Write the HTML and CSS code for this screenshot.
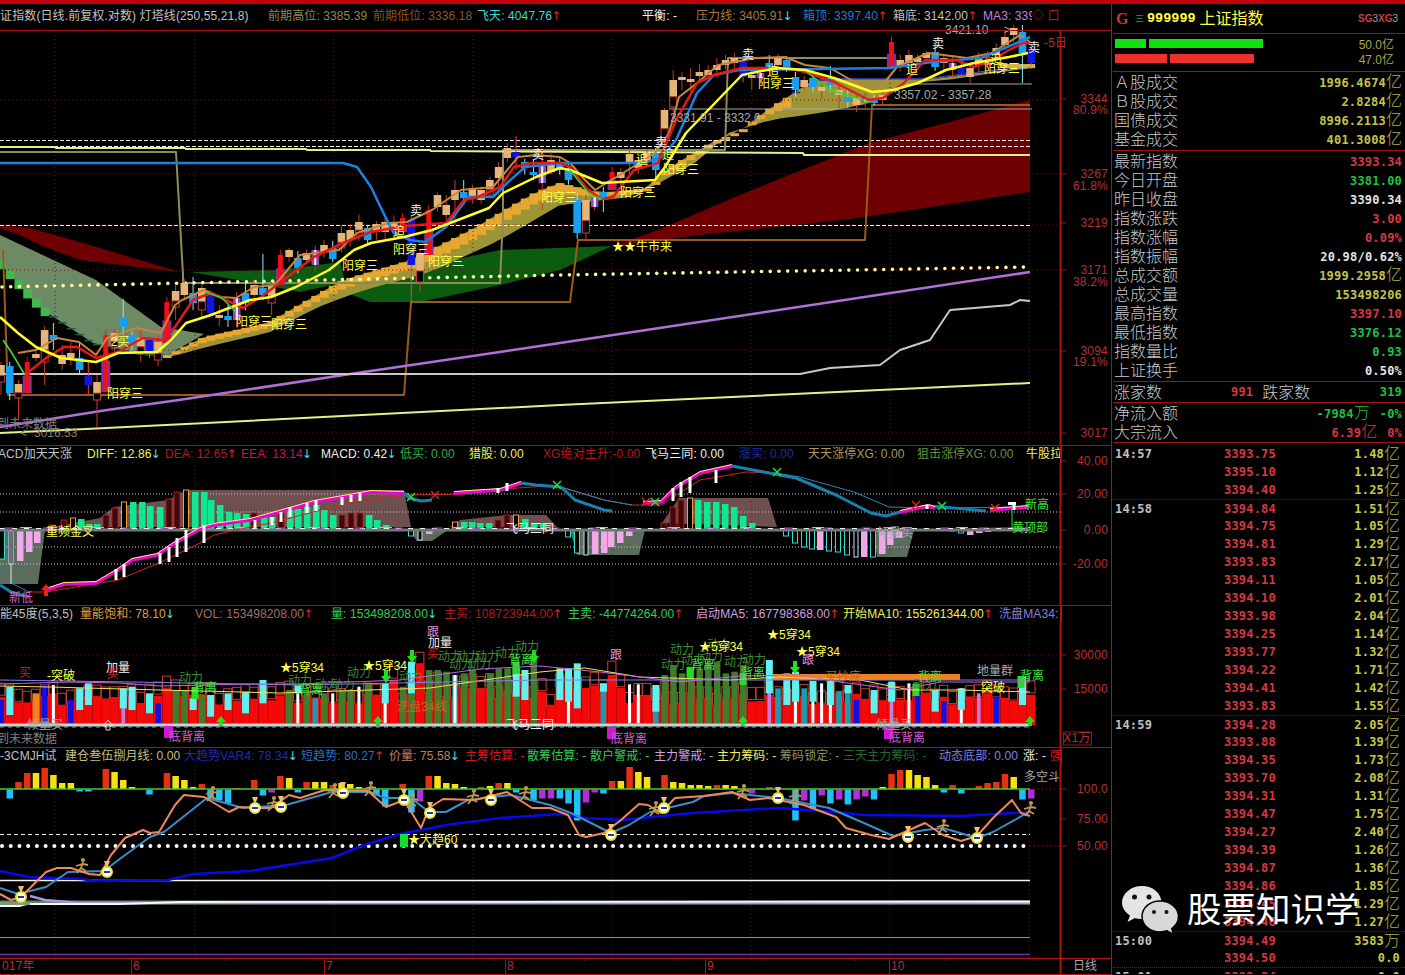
FILE: index.html
```html
<!DOCTYPE html>
<html lang="zh">
<head>
<meta charset="utf-8">
<title>上证指数</title>
<link rel="stylesheet" href="styles.css">
</head>
<body>
<div class="topbar"></div>
<div class="app">
  <main class="charts">
    <section class="pane">
      <div class="legend legend-main" id="lg0"></div>
      <svg class="plot plot-main" id="p0" viewBox="0 31 1111 414"></svg>
    </section>
    <section class="pane">
      <div class="legend" id="lg1"></div>
      <svg class="plot plot-macd" id="p1" viewBox="0 463 1111 142"></svg>
    </section>
    <section class="pane">
      <div class="legend" id="lg2"></div>
      <svg class="plot plot-vol" id="p2" viewBox="0 623 1111 124"></svg>
    </section>
    <section class="pane">
      <div class="legend" id="lg3"></div>
      <svg class="plot plot-kd" id="p3" viewBox="0 765 1111 210"></svg>
    </section>
  </main>
  <aside class="side">
    <div class="sec head">
      <span class="g">G</span><span class="sanb">三</span><b class="code">999999</b><span class="iname">上证指数</span>
      <span class="sgxg"><b>SG</b>3<b>XG</b>3</span>
    </div>
    <div class="sec bars">
      <div class="barrow"><i class="bar gr b31"></i><i class="bar gr b114"></i><span class="barv">50.0亿</span></div>
      <div class="barrow"><i class="bar rd b52"></i><i class="bar rd b84"></i><span class="barv">47.0亿</span></div>
    </div>
    <div class="sec s4">
      <div class="row"><span>Ａ股成交</span><em class="ol">1996.4674<u>亿</u></em></div>
      <div class="row"><span>Ｂ股成交</span><em class="ol">2.8284<u>亿</u></em></div>
      <div class="row"><span>国债成交</span><em class="ol">8996.2113<u>亿</u></em></div>
      <div class="row"><span>基金成交</span><em class="ol">401.3008<u>亿</u></em></div>
    </div>
    <div class="sec s12">
      <div class="row"><span>最新指数</span><em class="re">3393.34</em></div>
      <div class="row"><span>今日开盘</span><em class="gn">3381.00</em></div>
      <div class="row"><span>昨日收盘</span><em class="wh">3390.34</em></div>
      <div class="row"><span>指数涨跌</span><em class="re">3.00</em></div>
      <div class="row"><span>指数涨幅</span><em class="re">0.09%</em></div>
      <div class="row"><span>指数振幅</span><em class="wh">20.98/0.62%</em></div>
      <div class="row"><span>总成交额</span><em class="ol">1999.2958<u>亿</u></em></div>
      <div class="row"><span>总成交量</span><em class="ol">153498206</em></div>
      <div class="row"><span>最高指数</span><em class="re">3397.10</em></div>
      <div class="row"><span>最低指数</span><em class="gn">3376.12</em></div>
      <div class="row"><span>指数量比</span><em class="gn">0.93</em></div>
      <div class="row"><span>上证换手</span><em class="wh">0.50%</em></div>
    </div>
    <div class="sec updown">
      <span>涨家数</span><em class="re n1">991</em><span class="lb2">跌家数</span><em class="gn n2">319</em>
    </div>
    <div class="sec s2">
      <div class="row"><span>净流入额</span><em class="gn">-7984<u>万</u><b class="pc">-0%</b></em></div>
      <div class="row"><span>大宗流入</span><em class="re">6.39<u>亿</u><b class="pc">0%</b></em></div>
    </div>
    <div class="ticks">
      <div class="tk"><span>14:57</span><em>3393.75</em><strong>1.48<u>亿</u></strong></div>
      <div class="tk"><span></span><em>3395.10</em><strong>1.12<u>亿</u></strong></div>
      <div class="tk"><span></span><em>3394.40</em><strong>1.25<u>亿</u></strong></div>
      <div class="tk sep"><span>14:58</span><em>3394.84</em><strong>1.51<u>亿</u></strong></div>
      <div class="tk"><span></span><em>3394.75</em><strong>1.05<u>亿</u></strong></div>
      <div class="tk"><span></span><em>3394.81</em><strong>1.29<u>亿</u></strong></div>
      <div class="tk"><span></span><em>3393.83</em><strong>2.17<u>亿</u></strong></div>
      <div class="tk"><span></span><em>3394.11</em><strong>1.05<u>亿</u></strong></div>
      <div class="tk"><span></span><em>3394.10</em><strong>2.01<u>亿</u></strong></div>
      <div class="tk"><span></span><em>3393.98</em><strong>2.04<u>亿</u></strong></div>
      <div class="tk"><span></span><em>3394.25</em><strong>1.14<u>亿</u></strong></div>
      <div class="tk"><span></span><em>3393.77</em><strong>1.32<u>亿</u></strong></div>
      <div class="tk"><span></span><em>3394.22</em><strong>1.71<u>亿</u></strong></div>
      <div class="tk"><span></span><em>3394.41</em><strong>1.42<u>亿</u></strong></div>
      <div class="tk"><span></span><em>3393.83</em><strong>1.55<u>亿</u></strong></div>
      <div class="tk sep"><span>14:59</span><em>3394.28</em><strong>2.05<u>亿</u></strong></div>
      <div class="tk"><span></span><em>3393.88</em><strong>1.39<u>亿</u></strong></div>
      <div class="tk"><span></span><em>3394.35</em><strong>1.73<u>亿</u></strong></div>
      <div class="tk"><span></span><em>3393.70</em><strong>2.08<u>亿</u></strong></div>
      <div class="tk"><span></span><em>3394.31</em><strong>1.31<u>亿</u></strong></div>
      <div class="tk"><span></span><em>3394.47</em><strong>1.75<u>亿</u></strong></div>
      <div class="tk"><span></span><em>3394.27</em><strong>2.40<u>亿</u></strong></div>
      <div class="tk"><span></span><em>3394.39</em><strong>1.26<u>亿</u></strong></div>
      <div class="tk"><span></span><em>3394.87</em><strong>1.36<u>亿</u></strong></div>
      <div class="tk"><span></span><em>3394.86</em><strong>1.85<u>亿</u></strong></div>
      <div class="tk"><span></span><em>3394.45</em><strong>1.29<u>亿</u></strong></div>
      <div class="tk"><span></span><em>3394.46</em><strong>1.27<u>亿</u></strong></div>
      <div class="tk sep"><span>15:00</span><em>3394.49</em><strong>3583<u>万</u></strong></div>
      <div class="tk"><span></span><em>3394.50</em><strong>0.0</strong></div>
      <div class="tk sep"><span>15:01</span><em>3393.34</em><strong>0.0</strong></div>
    </div>
  </aside>
</div>
<div class="watermark">
  <svg class="wx" viewBox="0 0 58 50" width="58" height="50">
    <path class="wxb" d="M20 1C9 1 0 8.500 0 17.500C0 23 3.500 27.500 8 30.500L5.500 37L13 33C15 33.600 17.500 34 20 34C31 34 39.500 26.500 39.500 17.500C39.500 8.500 31 1 20 1Z"/>
    <circle class="wxk" cx="12.500" cy="12" r="2.500"/><circle class="wxk" cx="27" cy="12" r="2.500"/>
    <path class="wxe" d="M38 16C27.500 16 20 23.200 20 31.500C20 39.800 27.500 47 38 47C40.500 47 43 46.500 45 45.800L51.500 49.500L49.800 43.500C54 40.500 56.500 36.300 56.500 31.500C56.500 23.200 48.500 16 38 16Z"/>
    <circle class="wxk" cx="32" cy="27" r="2"/><circle class="wxk" cx="44.500" cy="27" r="2"/>
  </svg>
  <span>股票知识学</span>
</div>
<script src="chart.js"></script>
</body>
</html>
```
FILE: styles.css
```css
* { box-sizing: border-box; }
html, body { margin: 0; height: 975px; width: 1405px; background: #000; overflow: hidden; }
body { font-family: "Liberation Sans", "Noto Sans CJK SC", sans-serif; color: #c0c0c0; position: relative; }
.topbar { height: 4px; background: #c40008; }
.app { display: flex; height: 971px; }
.charts { width: 1111px; flex: none; display: flex; flex-direction: column; }
.pane { display: flex; flex-direction: column; border-top: 1px solid #a81018; }
.pane:first-child { border-top: 0; }
.legend { display: flex; width: 1062px; height: 17px; line-height: 16px; font-size: 12px; white-space: nowrap; overflow: hidden; border-right: 2px solid #b01018; letter-spacing: .1px; }
.legend-main { height: 27px; line-height: 24px; border-bottom: 1px solid #a81018; width: 1111px; border-right: 0; position: relative; }
.lgi { flex: none; overflow: hidden; }
.lgi i { font: 12px "DejaVu Sans", sans-serif; color: #40e0f0; margin-left: -1px; }
.lgi i.up { color: #f02020; }
.plot { display: block; width: 1111px; overflow: visible; }
.plot-main { height: 414px; }
.plot-macd { height: 142px; }
.plot-vol { height: 124px; }
.plot-kd { height: 210px; }
svg text { font-family: "Liberation Sans", "Noto Sans CJK SC", sans-serif; font-size: 12px; dominant-baseline: central; }
.ax { fill: #b83030; font-size: 12px; letter-spacing: .2px; }
.yl { fill: #ffff50; }
.wt { fill: #f0f0f0; }
.gy { fill: #a8a8a8; }
.dm { fill: #808080; }
.dg { fill: #3c8c34; }
.bg { fill: #40e040; }
.pk { fill: #d060d0; }
.lp { fill: #e090d0; }
.rd { fill: #d02020; }
.og { fill: #c06820; }

/* legend colours */
.c-gy { color: #c0c0c0; } .c-ol { color: #8c8c50; } .c-br { color: #8a5620; } .c-cy { color: #40d8d8; }
.c-wh { color: #f0f0f0; } .c-ta { color: #b07840; } .c-bl { color: #2878d0; } .c-pu { color: #c080e0; }
.c-ye { color: #f0f060; } .c-re { color: #b81818; } .c-ma { color: #c81060; } .c-gn { color: #30b040; }
.c-db { color: #1c2cb8; } .c-kh { color: #a89860; } .c-ok { color: #68903c; } .c-og { color: #e0a040; }
.c-rb { color: #a07060; } .c-lg { color: #30d050; } .c-pk { color: #d0a0e0; } .c-vi { color: #8080e0; }
.c-kk { color: #c0c080; } .c-sb { color: #3070c0; } .c-sa { color: #c08060; } .c-dk { color: #206830; }
.c-om { color: #909060; } .c-rr { color: #d81818; }

.side { width: 294px; flex: none; border-left: 1px solid #b01018; padding-left: 1px; font-size: 16px; }
.sec { border-bottom: 1px solid #a01018; }
.head { height: 30px; display: flex; align-items: center; padding-left: 3px; position: relative; }
.g { color: #c83838; font: bold 16px "Liberation Serif", serif; width: 19px; }
.sanb { color: #20a050; font-size: 9px; width: 12px; }
.code { font: bold 13.500px "Liberation Mono", monospace; color: #ffff40; margin-right: 4px; }
.iname { color: #ffff40; font-size: 16px; margin-bottom: 3px; }
.sgxg { margin-left: auto; margin-right: 7px; font: 10px "Liberation Sans", sans-serif; color: #a0a0a0; }
.sgxg b { color: #c84048; }
.bars { height: 38px; padding: 5px 0 0 2px; display: flex; flex-direction: column; gap: 6px; }
.barrow { display: flex; gap: 3px; height: 9px; align-items: center; position: relative; }
.bar { display: block; height: 9px; }
.gr { background: #10e010; } .rd { background: #f03030; }
.b31 { width: 31px; } .b114 { width: 114px; } .b52 { width: 52px; } .b84 { width: 84px; }
.barv { position: absolute; right: 11px; font-size: 12px; color: #a8a848; }
.row { height: 19px; line-height: 19px; display: flex; justify-content: space-between; align-items: center; padding: 0 3px 0 1px; font-weight: 300; color: #c8c8c8; }
.row em, .n1, .n2, .tk em, .tk strong { font: bold 12px "DejaVu Sans Mono", monospace; letter-spacing: .2px; }
.row em, .tk strong { display: flex; align-items: center; justify-content: flex-end; height: 18px; font-style: normal; }
.row em u, .tk strong u { text-decoration: none; font: 300 16px/18px "Noto Sans CJK SC", sans-serif; color: #b0b048; letter-spacing: 0; margin-bottom: 5px; }
.row .pc { font: bold 12px "DejaVu Sans Mono", monospace; margin-left: 10px; }
.ol { color: #c4c44c; } .re { color: #d83840; } .gn { color: #20c040; } .wh { color: #e4e4e4; }
.s4 { height: 79px; padding-top: 1px; }
.s12 { height: 231px; padding-top: 1px; }
.updown { height: 21px; line-height: 21px; display: flex; align-items: center; padding-left: 1px; font-weight: 300; color: #c8c8c8; }
.updown em { font-style: normal; }
.n1 { margin-left: 69px; }
.lb2 { margin-left: 9px; }
.n2 { margin-left: auto; margin-right: 3px; }
.s2 { height: 40px; padding-top: 1px; }
.s2 .row em u { color: inherit; }
.ticks { padding-top: 2px; height: 531px; overflow: hidden; }
.tk { display: grid; grid-template-columns: 109px 60px 1fr; height: 18px; padding: 0 5px 0 2px; align-items: center; }
.tk span { font: bold 12px "DejaVu Sans Mono", monospace; letter-spacing: .2px; color: #c0c0c0; }
.tk em { color: #d83840; font-style: normal; }
.tk strong { color: #c8c84c; }
.sep { border-top: 1px dotted #701820; }
.watermark { position: absolute; left: 1122px; top: 885px; display: flex; align-items: center; gap: 7px; color: #fff; font-size: 34.500px; line-height: 50px; }
.wx { display: block; }
.wxb { fill: #e4e4e4; } .wxe { fill: #d8d8d8; stroke: #000; stroke-width: 1.500; } .wxk { fill: #111; }
```
FILE: chart.js
```js
const X = i => 1 + 8.73 * i;
const r = i => { const s = Math.sin(i * 12.9898 + 4.1) * 43758.5453; return s - Math.floor(s); };
const pts = a => a.map(p => p[0] + ',' + p[1]).join(' ');
const L = (a, c, w, extra) => `<polyline points="${pts(a)}" fill="none" stroke="${c}" stroke-width="${w || 1}" stroke-linejoin="round" ${extra || ''}/>`;
const H = (x1, x2, y, c, w, extra) => `<line x1="${x1}" x2="${x2}" y1="${y}" y2="${y}" stroke="${c}" stroke-width="${w || 1}" ${extra || ''}/>`;
const V = (x, y1, y2, c, w, extra) => `<line x1="${x}" x2="${x}" y1="${y1}" y2="${y2}" stroke="${c}" stroke-width="${w || 1}" ${extra || ''}/>`;
const R = (x, y, w, h, f, s) => `<rect x="${x}" y="${y}" width="${w}" height="${h}" fill="${f}" ${s ? `stroke="${s}"` : ''}/>`;
const PG = (a, f) => `<polygon points="${pts(a)}" fill="${f}"/>`;
const T = (x, y, s, c, anchor) => `<text x="${x}" y="${y}" class="${c}" text-anchor="${anchor || 'middle'}">${s}</text>`;
const interp = (a, x) => {
  if (x <= a[0][0]) return a[0][1];
  for (let k = 1; k < a.length; k++) if (x <= a[k][0]) {
    const t = (x - a[k - 1][0]) / (a[k][0] - a[k - 1][0]);
    return a[k - 1][1] + t * (a[k][1] - a[k - 1][1]);
  }
  return a[a.length - 1][1];
};
const GRID = [55, 195, 334, 473, 612, 751, 890, 1029];
const vgrid = (y1, y2) => GRID.map(x => V(x, y1, y2, '#6a1418', 1, 'stroke-dasharray="1 3"')).join('');
const axisLine = (y1, y2) => V(1060.5, y1, y2, '#b01018', 2);
const tick = (y, len) => H(1060, 1060 + (len || 6), y, '#a01018', 1);

/* legends: [text, value, arrow, colour, start-x] */
const legends = [
  [['上证指数(日线.前复权.对数) 灯塔线(250,55,21,8)', '', '', 'gy', -12], ['前期高位: 3385.39', '', '', 'ol', 268], ['前期低位: 3336.18', '', '', 'br', 373], ['飞天: 4047.76', '', 'u', 'cy', 477], ['平衡: -', '', '', 'wh', 642], ['压力线: 3405.91', '', 'd', 'ta', 696], ['箱顶: 3397.40', '', 'u', 'bl', 803], ['箱底: 3142.00', '', 'u', 'gy', 893], ['MA3: 339', '', '', 'pu', 983], ['◇ 口', '', '', 're', 1032]],
  [['ACD加天天涨', '', '', 'gy', -2], ['DIFF: 12.86', '', 'd', 'ye', 87], ['DEA: 12.65', '', 'u', 're', 165], ['EEA: 13.14', '', 'd', 'ma', 241], ['MACD: 0.42', '', 'd', 'wh', 321], ['低买: 0.00', '', '', 'gn', 400], ['猎股: 0.00', '', '', 'ye', 469], ['XG绝对主升:-0.00', '', '', 're', 543], ['飞马三同: 0.00', '', '', 'wh', 645], ['涨买: 0.00', '', '', 'db', 739], ['天天涨停XG: 0.00', '', '', 'kh', 808], ['狙击涨停XG: 0.00', '', '', 'ok', 917], ['牛股拉', '', '', 'ye', 1026]],
  [['能45度(5,3,5)', '', '', 'gy', 0], ['量能饱和: 78.10', '', 'd', 'og', 80], ['VOL: 153498208.00', '', 'u', 'rb', 195], ['量: 153498208.00', '', 'd', 'lg', 331], ['主买: 108723944.00', '', 'u', 're', 444], ['主卖: -44774264.00', '', 'u', 'lg', 568], ['启动MA5: 167798368.00', '', 'u', 'pk', 696], ['开始MA10: 155261344.00', '', 'u', 'ye', 843], ['洗盘MA34:', '', '', 'vi', 999]],
  [['-3CMJH试', '', '', 'gy', 0], ['建仓叁伍捌月线: 0.00', '', '', 'kk', 65], ['大趋势VAR4: 78.34', '', 'd', 'db', 184], ['短趋势: 80.27', '', 'u', 'sb', 301], ['价量: 75.58', '', 'd', 'sa', 389], ['主筹估算: -', '', '', 'rr', 465], ['散筹估算: -', '', '', 'lg', 527], ['散户警戒: -', '', '', 'lg', 590], ['主力警戒: -', '', '', 'pk', 654], ['主力筹码: -', '', '', 'ye', 717], ['筹码锁定: -', '', '', 'om', 780], ['三天主力筹码: -', '', '', 'dk', 843], ['动态底部: 0.00', '', '', 'vi', 939], ['涨: -', '', '', 'wh', 1023], ['强', '', '', 'rr', 1050]]
];
legends.forEach((items, n) => {
  const el = document.getElementById('lg' + n);
  let html = '';
  items.forEach((it, k) => {
    const next = k + 1 < items.length ? items[k + 1][4] : 1060;
    const arrow = it[2] === 'u' ? '<i class="up">↑</i>' : it[2] === 'd' ? '<i>↓</i>' : '';
    const ml = k === 0 ? ` margin-left:${it[4]}px;` : '';
    html += `<span class="lgi c-${it[3]}" style="width:${next - it[4]}px;${ml}">${it[0]}${arrow}</span>`;
  });
  el.innerHTML = html;
});

/* ========== main pane ========== */
const orange = [[18,353],[36,350],[57,338],[79,342],[96,355],[107,338],[136,328],[161,333],[175,305],[182,300],[204,290],[221,297],[236,298],[254,287],[275,285],[300,255],[339,250],[357,233],[389,223],[407,222],[432,210],[461,190],[493,187],[518,157],[536,155],[560,157],[570,163],[585,180],[595,190],[623,173],[655,153],[669,133],[679,97],[697,83],[718,65],[756,58],[785,57],[805,65],[830,68],[851,80],[876,93],[897,67],[928,53],[967,58],[992,53],[1020,35],[1030,42]];
const yellow = [[0,317],[18,333],[36,347],[61,358],[96,362],[118,353],[157,352],[171,340],[186,323],[211,315],[250,300],[271,297],[296,287],[329,270],[354,250],[371,243],[404,237],[432,230],[489,208],[503,193],[536,177],[560,168],[570,170],[602,183],[655,180],[665,167],[686,133],[742,75],[777,68],[805,70],[834,78],[872,92],[893,90],[918,83],[946,70],[974,63],[1009,57],[1028,53]];
const red = [[25,375],[46,358],[64,347],[77,347],[96,358],[118,352],[143,338],[164,340],[175,327],[193,300],[211,293],[243,308],[261,297],[314,257],[343,243],[371,232],[404,226],[446,223],[464,200],[478,197],[500,187],[514,167],[532,163],[560,163],[570,167],[588,190],[602,199],[613,197],[634,170],[658,163],[676,120],[697,83],[714,75],[742,68],[788,68],[805,72],[834,82],[869,100],[883,98],[904,83],[925,60],[956,60],[974,67],[992,60],[1009,50],[1023,43],[1030,43]];
const blue = [[0,163],[343,163],[357,167],[371,187],[382,210],[393,232],[410,240],[425,242],[446,227],[468,197],[493,197],[507,183],[525,167],[560,163],[644,163],[662,157],[676,140],[697,93],[714,75],[739,70],[890,68],[932,62],[981,58],[1012,45],[1030,37]];

const tanTopF = [[168,355],[204,337],[268,323],[343,280],[411,260],[471,230],[536,192],[560,183],[600,193],[651,188],[665,170],[711,143],[742,130],[767,110],[788,97],[812,80],[841,78],[928,78],[1016,67],[1035,65]];
const tanBot = [[171,357],[214,345],[268,333],[318,307],[364,290],[428,273],[500,240],[560,205],[630,197],[665,180],[700,160],[728,133],[770,120],[820,113],[872,103],[911,83],[946,80],[1030,68]];

let m = '';
// dark bands
m += PG([[0,225],[30,228],[90,245],[180,272],[145,268],[80,260],[40,245],[20,235],[0,228]], '#6e0004');
m += PG([[610,247],[658,230],[735,197],[869,143],[946,123],[1030,100],[1030,192],[911,210],[850,219],[700,235]], '#6e0004');
m += PG([[190,272],[280,270],[340,262],[345,282],[300,292],[250,282]], '#0c5c10');
m += PG([[345,292],[430,265],[500,250],[612,246],[560,270],[500,285],[420,302],[370,302]], '#0c5c10');
// left grey-green ribbon
m += PG([[0,235],[96,280],[161,327],[204,334],[168,355],[136,353],[93,343],[43,310],[21,287],[0,263]], '#6c8a64');
// stepped edge of the green ribbon
const leftEdge = [[0,259],[21,283],[43,306],[93,340],[136,350],[168,353]];
for (let i = 0; i < 20; i++) {
  const x = X(i) - 4, y = interp(leftEdge, x + 4);
  m += i < 6 ? R(x, y, 8.73, 9, '#3fb84c') : R(x, y + 3, 8.73, 1.500, '#206048');
}
// gold ribbon
const rib = [];
for (let x = 168; x <= 1035; x += 17) rib.push([x, interp(tanTopF, x)]);
const ribB = [];
for (let x = 1035; x >= 168; x -= 17) ribB.push([x, interp(tanBot, x)]);
m += PG(rib.concat(ribB), '#9c9436');
for (let i = 19; i <= 118; i++) {
  const x = X(i) - 4, t = interp(tanTopF, x + 4), b = interp(tanBot, x + 4);
  const th = x > 790 ? 1.500 : Math.min(Math.max(3, (b - t) * 0.5), 11);
  m += R(x, t, 8.73, th, x > 790 ? '#3030a0' : '#e8a830');
}
m += R(1000, 64, 35, 4, '#d8b040');
// horizontal grid
[100, 174, 225, 270, 350, 433].forEach(y => { m += H(0, 1060, y, '#6a1418', 1, 'stroke-dasharray="1 3"'); });
m += vgrid(31, 445);
// reference lines
m += H(0, 1030, 140.500, '#f0f0f0', 1, 'stroke-dasharray="4 2"');
m += H(0, 1030, 146.500, '#f0f0f0', 1, 'stroke-dasharray="4 2"');
m += H(0, 1030, 225.500, '#f0f0f0', 1, 'stroke-dasharray="4 2"');
m += H(900, 1032, 84, '#a8a8a8', 1);
m += H(669, 1032, 109, '#a8a8a8', 1);
// step lines
m += L([[0,152],[176,152],[183,275],[183,283],[500,283],[503,215],[503,150],[725,150],[728,58],[893,58]], '#8c8c58', 2);
m += L([[3,250],[8,395],[404,395],[411,302],[570,302],[578,240],[865,240],[872,105],[1030,105]], '#9a5a1c', 2);
m += L([[0,147],[55,147],[56,148],[185,148],[186,149],[306,149],[307,150],[430,150],[431,151],[803,153],[804,155],[1030,155]], '#e4f088', 2);
m += L([[0,433],[86,429],[560,405],[1030,383]], '#e4f088', 2);
m += L([[0,427],[107,410],[179,400],[357,373],[560,343],[1030,272]], '#b070d8', 2.500);
m += L([[0,374],[800,374],[830,368],[880,365],[900,350],[930,340],[950,310],[1010,305],[1020,300],[1030,301]], '#c8c8c8', 2);
for (let x = 2; x < 1030; x += 8.73) m += `<circle cx="${x}" cy="${interp([[0,287],[560,275],[1030,267]], x)}" r="1.800" fill="#ffffa0"/>`;

// candles: [i,type,top,bot,wickTop,wickBot]
const C = [[1,'b',366,393],[0,'t',365,382,362,395],[2,'t',384,398,380,420],[3,'r',362,393],[4,'t',354,358],[5,'t',330,362,326,385],[6,'b',335,340,323,350],[7,'t',355,364,345,370],[8,'t',353,358,342,365],[9,'b',358,370,343,375],[10,'d',376,385,360,395],[11,'t',382,400,375,427],[12,'r',335,392],[13,'t',333,347],[14,'b',317,327,299,335],[15,'b',335,344],[16,'t',338,352,330,362],[17,'d',340,353],[18,'t',342,360,335,366],[19,'r',302,343],[20,'t',291,307,285,320],[21,'t',283,295],[22,'b',293,303,277,310],[23,'t',288,310,285,318],[24,'d',295,313],[25,'t',315,318,305,326],[26,'b',316,320,305,327],[27,'p',298,320],[28,'b',293,303,282,310],[29,'t',285,295],[30,'b',288,295,254,300],[31,'t',285,303,282,315],[32,'r',255,285],[33,'t',250,257,248,262],[34,'b',258,268],[35,'t',253,260],[36,'p',250,265],[37,'t',245,252],[38,'b',248,259],[39,'t',233,248],[40,'t',230,240],[41,'t',222,235],[42,'b',228,240],[43,'t',224,232],[44,'t',222,232],[45,'t',222,230],[46,'r',218,232],[47,'d',220,265,216,305],[48,'t',253,282,250,292],[49,'r',210,255],[50,'t',195,207],[51,'t',205,215,195,220],[52,'t',190,200,180,225],[53,'b',192,198,180,205],[54,'t',188,198],[55,'t',190,200],[56,'t',180,195],[57,'t',167,178,162,195],[58,'t',148,158],[59,'d',152,157,136,170],[60,'b',162,168],[61,'b',172,175,160,180],[62,'p',165,183,148,210],[63,'t',160,172],[64,'b',163,170],[65,'b',170,180],[66,'b',200,233],[67,'t',200,233,195,240],[68,'p',197,207],[69,'b',192,197,187,212],[70,'r',172,190],[71,'t',172,178,168,186],[72,'t',154,162,148,175],[73,'t',160,168],[74,'t',153,162],[75,'b',153,170,148,178],[76,'t',110,140,108,150],[77,'t',80,107,70,112],[78,'t',77,80,72,90],[79,'t',79,82,68,92],[80,'t',72,76,64,82],[81,'t',70,75],[82,'t',65,70,58,78],[83,'t',60,65],[84,'t',58,63],[85,'d',60,77],[86,'t',75,78,70,90],[87,'p',73,78],[88,'b',63,68,55,72],[89,'t',58,65],[90,'b',60,67,56,72],[91,'b',77,90,72,97],[92,'t',80,87],[93,'b',78,87],[94,'t',87,91,82,98],[95,'b',78,85,66,92],[96,'t',90,95,85,108],[97,'b',97,102,90,108],[98,'t',98,105],[99,'p',98,102],[100,'b',99,103],[101,'t',95,100],[102,'r',42,68,33,75],[103,'t',60,67],[104,'t',55,63,50,72],[105,'t',58,62],[106,'t',53,58],[107,'b',52,67],[108,'t',58,63],[109,'p',63,70],[110,'d',68,74,60,78],[111,'t',68,77],[112,'t',57,65],[113,'r',56,65],[114,'t',48,55],[115,'t',37,45,30,50],[116,'t',28,35,25,42],[117,'b',32,53,25,83],[118,'d',50,63,48,66]];
C.forEach(c => {
  const [i, k, t, b, wt, wb] = c, x = X(i);
  const wT = wt || t - 2 - r(i) * 6, wB = wb || b + 2 + r(i + 50) * 6;
  if (k === 't') {
    m += V(x, wT, wB, '#c83828', 1);
    const h = b - t;
    if (h > 12) {
      m += R(x - 3.800, t, 7.600, h * .62, '#e4b478') + R(x - 3.500, t + h * .62, 7, h * .38, '#000', '#c84030');
    } else m += R(x - 3.800, t, 7.600, h, '#e4b478');
  } else if (k === 'b') {
    m += V(x, wT, wB, '#90e8f4', 1) + R(x - 3.800, t, 7.600, b - t, '#18a0f0');
  } else if (k === 'd') {
    m += V(x, wT, wB, '#f04040', 1) + R(x - 3.800, t, 7.600, b - t, '#1414e0');
  } else if (k === 'r') {
    m += R(x - 4.500, t + (b - t) * .45, 9, (b - t) * .55, '#8030a8') + V(x, t - 5, b, '#f01010', 1) + R(x - 2.500, t, 5, b - t, '#f01018');
  } else {
    m += V(x, wT, wB, '#c83828', 1) + R(x - 3.800, t, 2.600, b - t, '#8848b8') + R(x - 1.200, t, 2.600, b - t, '#f0e8f8') + R(x + 1.400, t, 2.400, b - t, '#8848b8');
  }
});
// MA lines
m += L(orange, '#c88440', 2);
m += L(blue, '#1c80e0', 2.500);
m += L(red, '#e81818', 2.500);
m += L(yellow, '#ffff20', 2.500);
m += L([[3,340],[10,350],[25,375]], '#40e040', 1.500) + L([[205,292],[222,298],[236,312]], '#20e030', 1.500) + L([[570,170],[590,195],[602,199]], '#20e030', 1.500) + L([[807,72],[830,90],[870,102]], '#20e030', 1.500);
// text labels
[[107,394],[236,322],[271,325],[342,266],[393,250],[428,262],[541,198],[620,193],[663,170],[758,84],[984,69]].forEach(p => { m += T(p[0], p[1], '阳穿三', 'yl', 'start'); });
[[416,211],[538,155],[661,143],[748,55],[938,44],[1034,48]].forEach(p => { m += T(p[0], p[1], '卖', 'wt'); });
[[399,232],[642,160],[668,155],[773,72],[912,70],[996,60]].forEach(p => { m += T(p[0], p[1], '追', 'yl'); });
m += T(120, 342, '2买', 'yl');
m += T(612, 247, '★★牛市来', 'yl', 'start');
m += T(945, 30, '3421.10 —&gt;', 'gy', 'start');
m += T(894, 95, '3357.02 - 3357.28', 'gy', 'start');
m += T(670, 118, '3331.91 - 3332.0', 'gy', 'start');
m += T(-3, 424, '到未来数据', 'dm', 'start');
m += T(20, 433, '&lt;', 'dm', 'start') + T(34, 433, '3016.53', 'dm', 'start');
m += T(1044, 43, '-5日', 'ax', 'start');
// axis
m += axisLine(31, 445);
[[99,'3344'],[110,'80.9%'],[174,'3267'],[186,'61.8%'],[223,'3219'],[270,'3171'],[282,'38.2%'],[351,'3094'],[362,'19.1%'],[433,'3017']].forEach(p => { m += T(1108, p[0], p[1], 'ax', 'end'); if (p[1].indexOf('%') < 0) m += tick(p[0]); });
[136, 200, 248, 310, 392].forEach(y => { m += tick(y, 3); });
document.getElementById('p0').innerHTML = m;

/* ========== MACD pane ========== */
let d = '';
d += PG([[0,530],[45,530],[38,584],[0,584]], '#5c6c5c');
d += PG([[52,527],[100,518],[114,507],[168,500],[186,490],[404,490],[411,527]], '#6e5050');
d += PG([[409,530],[448,530],[432,541],[417,541]], '#5c6c5c');
d += PG([[450,527],[460,520],[507,515],[546,515],[557,527]], '#6e5050');
d += PG([[570,530],[645,530],[639,555],[577,555]], '#5c6c5c');
d += PG([[662,523],[679,498],[768,498],[777,527]], '#6e5050');
d += PG([[873,530],[914,530],[907,557],[877,557]], '#5c6c5c');
d += PG([[900,530],[1020,527],[1030,530]], '#6e5050');
d += vgrid(465, 605);
[494, 512, 547, 564].forEach(y => { d += H(0, 1060, y, '#c8c8c8', 1, 'stroke-dasharray="1 2"'); });
const up = [[52,525,'d'],[64,520,'d'],[73,518,'o'],[81,519,'m'],[89,524,'m'],[97,524,'m'],[106,515,'d'],[115,508,'d'],[124,502,'o'],[133,502,'m'],[142,502,'m'],[150,506,'m'],[160,507,'m'],[169,499,'d'],[177,492,'d'],[186,490,'o'],[195,492,'m'],[204,492,'m'],[211,500,'m'],[220,505,'m'],[229,512,'m'],[237,513,'m'],[246,514,'m'],[254,513,'d'],[264,515,'m'],[272,517,'m'],[281,512,'d'],[290,507,'m'],[298,509,'m'],[307,507,'m'],[316,505,'m'],[324,510,'m'],[333,515,'m'],[342,515,'d'],[351,513,'d'],[360,513,'d'],[369,515,'m'],[377,520,'m'],[386,525,'m'],[455,522,'o'],[464,522,'m'],[472,522,'m'],[480,523,'m'],[489,523,'m'],[498,520,'d'],[507,515,'d'],[516,515,'o'],[525,519,'m'],[534,523,'m'],[543,523,'m'],[664,523,'d'],[673,507,'d'],[681,500,'d'],[690,498,'o'],[698,500,'m'],[707,502,'m'],[716,502,'m'],[725,504,'m'],[734,507,'m'],[743,516,'m'],[752,523,'m']];
up.forEach(b => {
  const h = 529 - b[1];
  if (b[2] === 'm') d += R(b[0] - 3, b[1], 6.500, h, '#10e890');
  if (b[2] === 'd') d += R(b[0] - 3, b[1], 6, h, '#400808', '#a02020');
  if (b[2] === 'o') d += R(b[0] - 2.500, b[1], 5, h, '#000', '#f0a030');
});
const dn = [[2,559,'c'],[11,564,'l'],[20,561,'p'],[29,552,'p'],[37,543,'p'],[411,536,'c'],[420,540,'l'],[429,534,'p'],[568,537,'c'],[577,553,'c'],[586,555,'l'],[595,554,'p'],[604,553,'p'],[611,547,'p'],[620,543,'p'],[629,536,'p'],[786,536,'c'],[795,543,'c'],[804,547,'c'],[812,549,'c'],[820,550,'p'],[829,551,'c'],[838,552,'c'],[847,555,'c'],[856,557,'l'],[864,557,'p'],[873,557,'c'],[882,554,'p'],[890,545,'p'],[899,538,'p'],[952,531,'c'],[961,533,'c'],[970,535,'p'],[979,533,'p'],[988,532,'p']];
dn.forEach(b => {
  const h = b[1] - 530;
  if (b[2] === 'p') d += R(b[0] - 3, 530, 6.500, h, '#f0a8e8');
  if (b[2] === 'c') d += R(b[0] - 2.500, 530, 5, h, '#000', '#30e0d0');
  if (b[2] === 'l') d += R(b[0] - 2, 530, 4, h, '#000', '#c0e0ff');
});
// zero band
d += H(0, 1030, 530, '#6c7c74', 3);
d += H(0, 1030, 528.500, '#f0f0f0', 1, 'stroke-dasharray="5 7"');
d += H(4, 1030, 528, '#c040e0', 1, 'stroke-dasharray="9 30"');
d += H(20, 1030, 527.500, '#e8c020', 1, 'stroke-dasharray="12 60"');
// lines
const magenta = [[[46,590],[64,584],[96,583],[118,570],[132,560],[157,555],[175,543],[200,529],[214,525],[250,520],[279,512],[314,502],[343,497],[371,492],[404,493]],[[454,493],[500,490],[521,483]],[[643,503],[661,502],[675,488],[700,473],[732,466]],[[900,512],[928,506],[935,508]],[[990,510],[1028,507]]];
const teal = [[[0,585],[11,592],[29,597]],[[404,493],[409,498],[421,501],[432,500]],[[521,483],[536,485],[561,487],[575,500],[604,510],[612,511]],[[732,466],[764,472],[796,478],[836,495],[871,513],[886,516],[907,510]],[[928,506],[954,508],[986,511]]];
const thinRed = [[11,583],[29,592],[46,592],[118,580],[161,562],[200,543],[214,535],[250,527],[271,523],[321,510],[357,502],[404,495]];
d += L([[0,570],[11,583],[29,592]], '#2888b0', 1) + L(thinRed.slice(1), '#d82020', 1);
d += L([[409,495],[464,494],[518,488],[546,486],[561,487],[604,500],[632,505],[661,505]], '#d82020', 1);
d += L([[661,505],[700,480],[746,472],[775,473]], '#d82020', 1);
d += L([[775,473],[800,477],[854,492],[889,507],[925,508],[1030,507]], '#2888b0', 1);
d += L([[561,487],[604,500],[632,505]], '#2888b0', 1);
teal.forEach(a => { d += L(a, '#1880b0', 3); });
magenta.forEach(a => { d += L(a, '#f000d8', 3.500) + L(a.map(p => [p[0], p[1] - 1.500]), '#fff070', 1); });
[[116,569,580],[124,564,577],[160,553,564],[169,547,562],[177,538,557],[186,530,552],[204,525,543],[255,520,528],[272,517,525],[281,512,522],[290,507,517],[307,503,513],[316,500,511],[342,497,505],[351,495,502],[360,493,501],[498,488,493],[507,483,491],[673,488,501],[681,482,497],[690,477,493],[716,470,483],[927,505,509],[1014,505,510]].forEach(b => { d += R(b[0] - 1.500, b[1], 3, b[2] - b[1], '#ffffff'); });
[[411,497,'#20e040'],[557,485,'#20e040'],[655,502,'#20e040'],[777,472,'#20e040'],[942,506,'#20e040'],[646,502,'#e02020'],[916,505,'#e02020'],[995,508,'#e02020'],[435,495,'#b03020']].forEach(a => { d += `<path d="M${a[0]-4} ${a[1]-4}l8 8m0-8l-8 8" stroke="${a[2]}" stroke-width="1.500" fill="none"/>`; });
d += `<path d="M46 584l5 6h-3v6h-4v-6h-3z" fill="#f02020"/>`;
d += V(1012, 503, 528, '#20e040', 1) + R(1008, 502, 8, 3, '#fff');
d += V(11, 530, 584, '#e0e0e0', 1);
d += T(21, 598, '新低', 'pk');
d += T(70, 532, '重频金叉', 'yl');
d += T(530, 529, '飞马三同', 'wt');
d += T(1037, 505, '新高', 'bg');
d += T(1030, 528, '黄顶部', 'bg');
d += T(895, 533, '倾量买', 'gy');
d += axisLine(463, 605);
[[461,'40.00'],[494,'20.00'],[530,'0.00'],[564,'-20.00']].forEach(p => { d += T(1108, p[0], p[1], 'ax', 'end') + tick(p[0]); });
[478, 512, 547, 582].forEach(y => { d += tick(y, 3); });
document.getElementById('p1').innerHTML = d;

/* ========== volume pane ========== */
const zv = z => 605 + z / 3;
let v = '';
v += vgrid(623, 747);
[655, 689].forEach(y => { v += H(0, 1060, y, '#6a1418', 1, 'stroke-dasharray="1 3"'); });
const level = i => {
  if (i === 48) return 175; if (i === 45) return 225; if (i === 19) return 250; if (i === 70) return 210;
  if (i >= 49 && i <= 62) return 240 + r(i) * 40;
  if (i >= 64 && i <= 71) return 232 + r(i) * 30;
  return 262 + r(i) * 38;
};
for (let i = 0; i <= 118; i++) {
  const l = zv(level(i)), x = X(i) - 4.360;
  v += R(x, l - 10 - r(i + 7) * 4, 8.200, 12, '#000', '#c04030');
  v += R(x, l, 8.730, 725 - l, '#f40808');
}
const bars = [[0,'b',285,355],[1,'c',245,330],[4,'o',265,355],[5,'b',238,355],[6,'w',240,355],[8,'b',285,355],[9,'c',250,315],[10,'c',235,300],[14,'k',250,355],[14,'c',250,310],[15,'c',245,315],[17,'c',265,325],[18,'b',295,355],[20,'g',255,355],[21,'g',255,355],[22,'c',280,315],[23,'g',270,355],[24,'c',270,335],[26,'c',265,315],[28,'c',260,325],[30,'c',225,295],[33,'g',255,355],[34,'w',265,355],[34,'c',240,265],[35,'g',265,355],[36,'t',280,355],[37,'g',265,355],[38,'w',265,355],[39,'g',255,355],[40,'g',255,355],[41,'w',245,355],[42,'g',235,355],[44,'w',235,355],[44,'c',235,295],[46,'g',245,355],[47,'g',170,355],[47,'c',170,265],[49,'g',195,355],[50,'g',195,355],[51,'g',200,355],[52,'t',210,355],[52,'w',210,355],[53,'g',205,355],[54,'g',195,355],[56,'g',205,355],[57,'g',190,355],[58,'g',190,355],[59,'g',170,355],[59,'c',190,275],[60,'c',195,285],[61,'g',150,355],[64,'c',190,285],[65,'w',190,355],[65,'c',190,290],[66,'c',175,310],[69,'t',235,355],[69,'c',235,260],[72,'w',238,355],[73,'w',238,355],[75,'t',240,355],[75,'c',240,320],[76,'g',210,355],[77,'g',180,355],[78,'g',205,355],[79,'g',185,355],[80,'g',190,355],[81,'g',175,355],[82,'g',170,355],[83,'g',205,355],[84,'g',200,355],[85,'g',180,355],[88,'k',165,355],[88,'c',165,265],[89,'t',250,355],[90,'c',205,300],[91,'w',200,355],[91,'c',200,290],[92,'t',250,355],[93,'w',228,355],[93,'c',228,290],[94,'w',235,355],[95,'w',228,355],[95,'c',228,300],[96,'t',258,355],[97,'t',240,355],[97,'c',240,265],[98,'b',285,355],[100,'c',255,325],[102,'k',230,355],[102,'c',230,290],[104,'w',235,355],[105,'b',270,355],[107,'c',255,320],[108,'b',288,355],[110,'w',250,355],[110,'c',250,315],[112,'k',265,355],[114,'b',275,355],[117,'c',215,300]];
const bcol = { b: '#1010e0', c: '#60f0f0', g: '#407c2c', t: '#1c9ab0', o: '#f08020', k: '#c080e0' };
bars.forEach(b => {
  const [i, k, t, bo] = b, x = X(i), y1 = zv(t), y2 = zv(bo);
  if (k === 'w') v += R(x - 1.500, y1, 3, y2 - y1, '#ffffff');
  else if (k === 'g') v += R(x - 3, y1, 6.500, y2 - y1, bcol.g);
  else if (k === 'k') v += R(x - 1.800, y1, 3.600, y2 - y1, bcol.k);
  else if (k === 't' || k === 'b') v += R(x - 2.800, y1, 5.600, y2 - y1, bcol[k]);
  else v += R(x - 3.400, y1, 7, y2 - y1, bcol[k]);
});
[[195,693],[516,668],[690,673],[743,679],[916,690],[1021,682]].forEach(p => { v += R(p[0] - 3.500, p[1] - 6, 7, 12, '#20e020'); });
v += R(773, 674, 187, 6, '#f08020');
v += L([[0,686],[50,687],[160,690],[280,693],[430,688],[540,672],[585,668],[640,677],[730,680],[780,677],[860,680],[910,690],[960,690],[1030,692]], '#f0e060', 1);
v += L([[0,684],[70,682],[120,683],[160,686],[250,684],[300,684],[400,680],[480,669],[540,666],[600,672],[680,682],[740,676],[800,675],[840,682],[900,690],[940,682],[1030,682]], '#c860e8', 1);
v += L([[0,680],[130,682],[300,685],[540,680],[780,680],[1030,680]], '#8080f0', 1);
v += H(0, 1030, 725, '#d0d0d0', 3);
v += H(0, 1030, 727, '#40c8c8', 1, 'stroke-dasharray="4 4"');
// arrows
const dnArrow = (x, y) => `<path d="M${x-2} ${y-7}h4v6h3l-5 7l-5-7h3z" fill="#20e020"/>`;
[[412,657],[386,677],[534,657],[795,668]].forEach(p => { v += dnArrow(p[0], p[1]); });
[[221,722],[378,722],[743,722],[1030,722]].forEach(p => { v += `<path d="M${p[0]} ${p[1]-6}l5 6h-3v4h-4v-4h-3z" fill="#20e020"/>`; });
v += `<path d="M108 720l5 6h-3v4h-4v-4h-3z" fill="none" stroke="#f0d0d0"/>`;
[[168,732],[611,733],[888,733]].forEach(p => { v += R(p[0] - 4, p[1] - 6, 9, 12, '#d018d0'); });
// text
[[191,678],[300,681],[327,685],[343,685],[359,673],[411,677],[450,657],[468,657],[487,657],[507,653],[527,647],[461,665],[479,665],[682,650],[673,665],[693,660],[711,657],[719,645],[736,662],[754,660],[925,685]].forEach(p => { v += T(p[0], p[1], '动力', 'dg'); });
[[205,688],[311,690],[521,660],[703,665],[753,673],[930,677]].forEach(p => { v += T(p[0], p[1], '背离', 'bg'); });
v += T(1032, 676, '背离', 'bg');
v += T(61, 676, '-突破', 'yl');
v += T(993, 688, '突破', 'yl');
[[118,668],[440,643]].forEach(p => { v += T(p[0], p[1], '加量', 'wt'); });
[[25,673],[113,674],[433,654]].forEach(p => { v += T(p[0], p[1], '买', 'rd'); });
[[302,668],[385,666],[721,647],[789,635],[818,652]].forEach(p => { v += T(p[0], p[1], '★5穿34', 'yl'); });
[[433,632],[616,655],[808,660]].forEach(p => { v += T(p[0], p[1], '跟', 'lp'); });
[[187,737],[629,739],[907,738]].forEach(p => { v += T(p[0], p[1], '底背离', 'pk'); });
v += T(530, 725, '飞马三同', 'wt');
v += T(45, 725, '倾量买', 'gy');
v += T(894, 725, '倾量买', 'gy');
v += T(-3, 739, '到未来数据', 'dm', 'start');
v += T(995, 671, '地量群', 'gy');
v += T(843, 677, '买抄底', 'og');
v += T(422, 707, '洗盘34线', 'og');
v += axisLine(623, 747);
[[655,'30000'],[689,'15000']].forEach(p => { v += T(1108, p[0], p[1], 'ax', 'end') + tick(p[0]); });
v += R(1063.500, 732, 28, 13, 'none', '#a01018') + T(1077, 738, 'X1万', 'ax');
document.getElementById('p2').innerHTML = v;

/* ========== bottom pane ========== */
let k = '';
k += vgrid(765, 958);
const upB = [[2,7,'r'],[3,16,'r'],[4,16,'y'],[5,21,'r'],[6,14,'y'],[7,6,'y'],[8,6,'y'],[12,20,'r'],[13,17,'y'],[14,9,'y'],[15,2,'y'],[19,16,'r'],[20,13,'y'],[21,9,'y'],[22,2,'y'],[23,5,'r'],[27,1,'r'],[29,9,'r'],[32,13,'r'],[33,11,'y'],[35,7,'r'],[36,7,'y'],[37,7,'y'],[38,4,'r'],[39,6,'y'],[40,5,'y'],[41,2,'y'],[46,5,'r'],[49,13,'r'],[50,13,'y'],[51,6,'y'],[52,5,'y'],[53,2,'y'],[55,2,'r'],[56,3,'y'],[57,6,'r'],[58,6,'y'],[70,8,'r'],[71,8,'y'],[72,22,'r'],[73,17,'y'],[74,12,'y'],[76,14,'r'],[77,7,'y'],[78,6,'y'],[79,4,'y'],[80,4,'y'],[81,3,'y'],[82,4,'r'],[83,4,'y'],[84,3,'y'],[88,2,'r'],[101,2,'y'],[102,15,'r'],[103,19,'r'],[104,19,'y'],[105,14,'y'],[106,12,'y'],[107,4,'y'],[109,4,'r'],[112,3,'r'],[113,6,'r'],[114,7,'r'],[115,15,'r'],[116,12,'y']];
upB.forEach(b => { k += R(X(b[0]) - 3.200, 789 - b[1], 6.500, b[1], b[2] === 'r' ? '#e83010' : '#f8e010'); });
const dnB = [[1,9,'c'],[9,2,'c'],[10,2,'c'],[17,5,'c'],[24,9,'c'],[25,11,'c'],[26,14,'c'],[30,6,'c'],[31,3,'p'],[34,3,'c'],[43,6,'c'],[44,17,'c'],[47,23,'c'],[48,12,'p'],[59,3,'c'],[61,11,'c'],[62,9,'p'],[63,9,'p'],[64,9,'c'],[65,14,'c'],[66,31,'c'],[67,13,'p'],[68,3,'p'],[69,4,'c'],[86,4,'p'],[91,31,'c'],[92,11,'p'],[93,19,'c'],[94,6,'p'],[95,14,'c'],[96,10,'p'],[97,15,'c'],[98,10,'p'],[99,7,'p'],[100,10,'c'],[108,3,'c'],[110,4,'c'],[117,10,'c'],[118,9,'p']];
dnB.forEach(b => { k += R(X(b[0]) - 3.200, 789.500, 6.500, b[1], b[2] === 'c' ? '#20c0f8' : '#b030d8'); });
k += H(0, 1030, 789, '#40d020', 1.500);
k += H(1030, 1060, 789, '#a01018', 1, 'stroke-dasharray="1 3"') + H(1030, 1060, 846, '#a01018', 1, 'stroke-dasharray="1 3"');
k += H(0, 1030, 834.500, '#f0f0f0', 1, 'stroke-dasharray="4 3"');
for (let x = 2; x < 1032; x += 8.73) k += `<circle cx="${x}" cy="846" r="2" fill="#ffffff"/>`;
k += H(0, 1030, 880.500, '#f4f4f4', 1.500);
k += H(0, 1030, 902.500, '#608868', 4);
k += L([[30,896],[45,900],[80,903],[260,903],[1030,903]], '#b090e0', 2.500);
k += L([[0,906],[20,906],[28,904],[120,904],[180,902],[1030,901.500]], '#f8f8f8', 1.800);
k += R(0, 902, 30, 3, '#7a9a78');
k += H(0, 1030, 937.500, '#40c060', 1);
k += H(0, 1030, 954.500, '#7030b0', 1.500);
const dblue = [[0,871],[29,877],[82,879],[93,881],[168,880],[193,874],[250,871],[332,858],[364,845],[400,834],[446,825],[500,818],[560,814],[586,818],[621,820],[693,813],[779,808],[836,812],[864,815],[961,816],[1029,812]];
const ltblue = [[0,888],[18,894],[46,887],[68,872],[104,871],[121,858],[150,837],[164,832],[207,798],[243,808],[286,805],[332,792],[368,792],[386,798],[411,798],[429,812],[446,812],[468,800],[511,795],[550,805],[571,813],[611,833],[629,825],[650,812],[693,802],[704,796],[732,793],[779,798],[829,808],[864,823],[893,836],[925,830],[943,828],[977,838],[993,832],[1029,812]];
const orng = [[0,894],[11,900],[21,897],[36,882],[46,872],[57,868],[71,868],[89,874],[100,875],[111,855],[125,838],[143,830],[150,833],[159,832],[175,805],[184,795],[204,797],[229,812],[239,807],[261,808],[271,808],[289,795],[300,798],[325,790],[368,791],[386,807],[404,800],[421,828],[429,808],[443,799],[475,800],[507,792],[532,808],[550,808],[568,815],[579,835],[586,837],[604,833],[621,820],[639,804],[648,805],[661,813],[675,798],[704,796],[732,792],[750,800],[768,798],[804,805],[836,817],[846,828],[871,835],[889,839],[925,823],[943,835],[961,841],[977,836],[993,818],[1012,800],[1021,813],[1030,816]];
k += L(dblue, '#0808e8', 2.500) + L(ltblue, '#3c8cc8', 2) + L(orng, '#f08858', 2);
const bag = (x, y) => `<path d="M${x-3} ${y-11}h6l-2 5h-2z" fill="#f0c070"/><circle cx="${x}" cy="${y}" r="5" fill="#fff" stroke="#f0e030" stroke-width="2"/><path d="M${x-3} ${y}h6" stroke="#204080" stroke-width="2"/>`;
const man = (x, y) => `<g stroke="#c09850" stroke-width="1.800" fill="none"><circle cx="${x+1}" cy="${y-7}" r="1.200" fill="#c09850"/><path d="M${x+1} ${y-5}l-2 6l-4 5M${x-1} ${y+1}l5 3M${x-6} ${y-1}l7-2l5 1"/></g>`;
[[82,867],[212,795],[273,805],[334,792],[370,790],[412,802],[473,798],[525,795],[655,810],[743,793],[795,798],[943,828],[1030,810]].forEach(p => { k += man(p[0], p[1]); });
[[21,897],[107,872],[255,808],[281,807],[343,793],[404,800],[430,813],[491,800],[611,835],[664,808],[778,798],[908,837],[977,838]].forEach(p => { k += bag(p[0], p[1]); });
k += R(400, 834, 8, 13, '#10e030');
k += T(408, 840, '★大趋60', 'yl', 'start');
k += T(1060, 777, '多空斗', 'gy', 'end');
// axis
k += axisLine(765, 975);
k += H(0, 1111, 958.500, '#b01018', 1.500);
k += H(0, 1111, 974.500, '#b01018', 1);
[[789,'100.0'],[819,'75.00'],[846,'50.00']].forEach(p => { k += T(1108, p[0], p[1], 'ax', 'end') + tick(p[0]); });
[[2,'017年'],[133,'6'],[326,'7'],[507,'8'],[707,'9'],[891,'10']].forEach(p => { k += T(p[0], 966, p[1], 'ax', 'start'); if (p[0] > 2) k += V(p[0] - 1.500, 958, 974, '#b01018', 1); });
for (let x = 45; x < 1060; x += 90) k += V(x, 959, 961, '#a01018', 1);
k += T(1085, 966, '日线', 'gy');
document.getElementById('p3').innerHTML = k;
```
